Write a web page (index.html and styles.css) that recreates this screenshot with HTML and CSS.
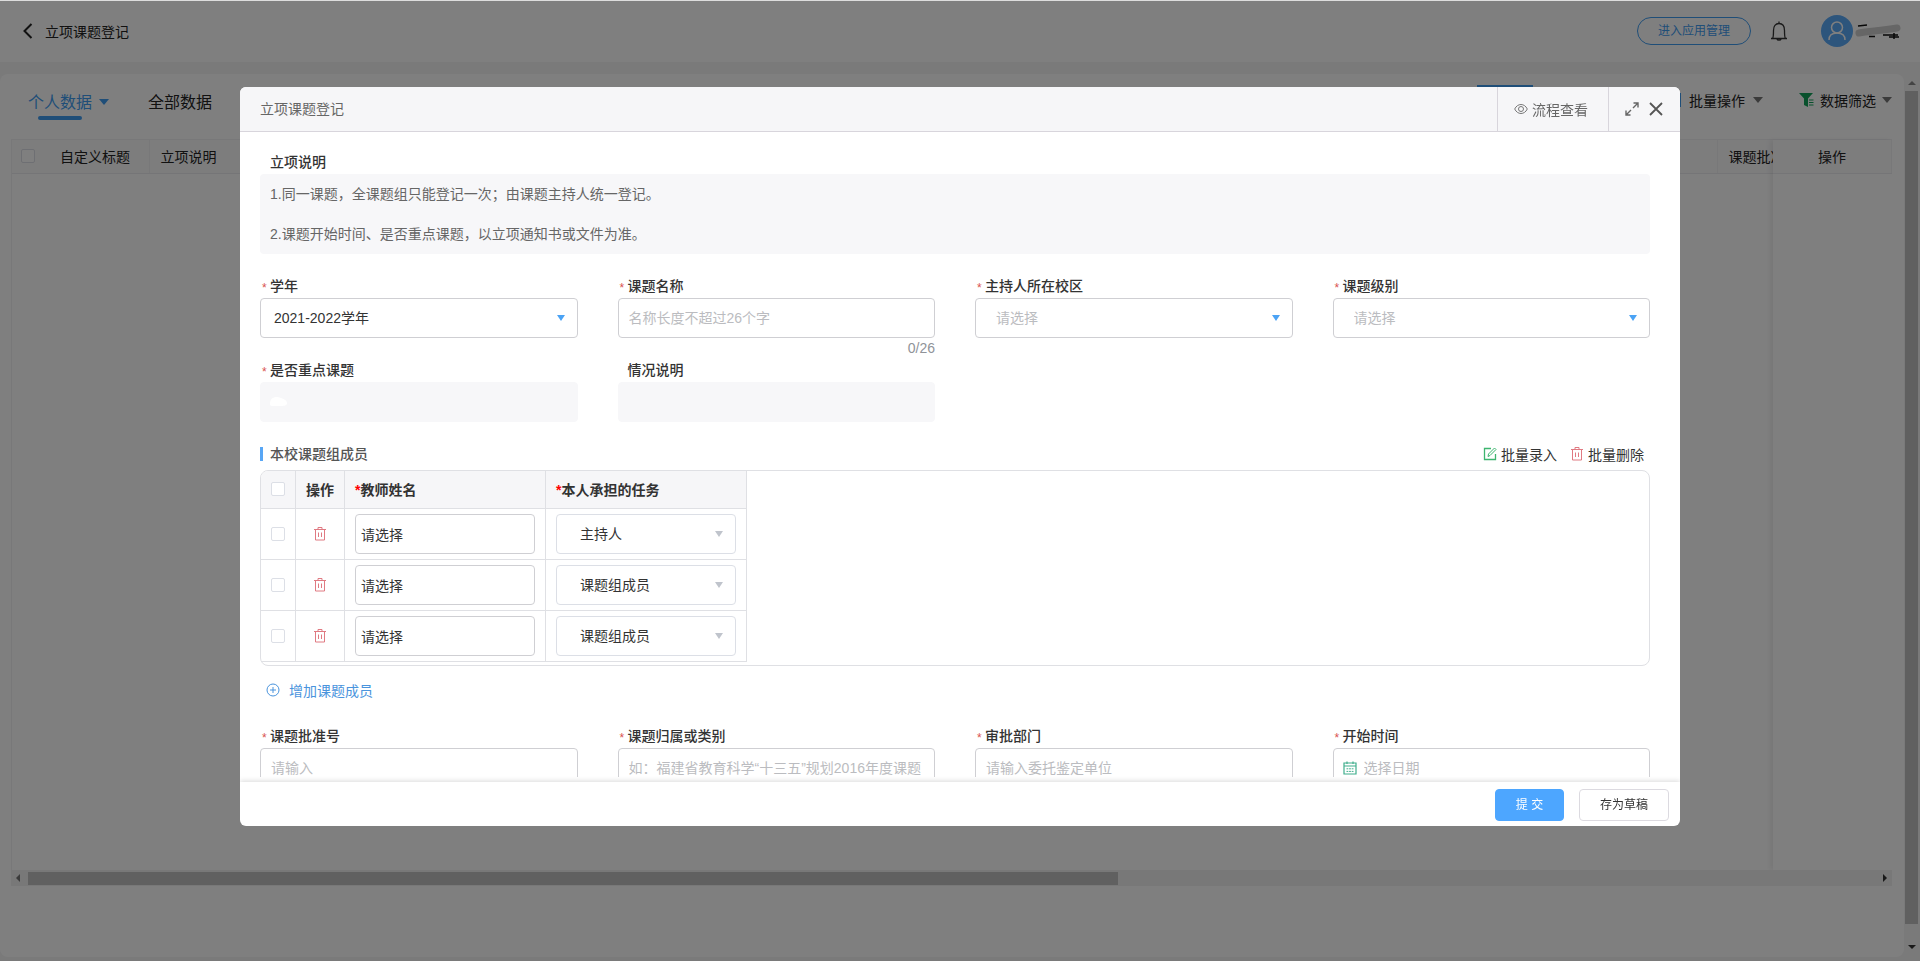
FILE: index.html
```html
<!DOCTYPE html>
<html lang="zh-CN">
<head>
    <meta charset="UTF-8">
    <meta name="viewport" content="width=device-width, initial-scale=1.0">
    <title>立项课题登记</title>
    <link rel="stylesheet" href="styles.css">
</head>
<body>
    <!-- shared icons -->
    <svg class="sprite" aria-hidden="true">
        <symbol id="icon-trash" viewBox="0 0 14 14">
            <path d="M1 2.500h12M5 2.500v-2h4v2M2.500 2.500v10.500h9V2.500M5.500 5.500v4.500M8.500 5.500v4.500" fill="none" stroke="currentColor"/>
        </symbol>
    </svg>

    <div class="page">
        <header class="topbar">
            <button type="button" class="icon-button" aria-label="返回">
                <svg width="12" height="16" viewBox="0 0 12 16"><path d="M10.500 1L3.500 8l7 7" fill="none" stroke="#222" stroke-width="2"/></svg>
            </button>
            <span class="topbar-title">立项课题登记</span>
            <button type="button" class="manage-button">进入应用管理</button>
            <button type="button" class="icon-button bell" aria-label="消息">
                <svg width="18" height="22" viewBox="0 0 18 22"><path d="M1 18.500h16M2.500 18.500c1-1 1-3 1-8 0-4 2-7 5.500-7s5.500 3 5.500 7c0 5 0 7 1 8M9 3.500V1.500M7 19c.3 1.500 3.700 1.500 4 0" fill="none" stroke="#333" stroke-width="1.300"/></svg>
            </button>
            <svg class="avatar" width="32" height="32" viewBox="0 0 32 32"><circle cx="16" cy="16" r="16" fill="#5aaaf8"/><g fill="none" stroke="#fff" stroke-width="1.500"><circle cx="16" cy="12.500" r="5.500"/><path d="M8 25c0-4.500 3-7 8-7s8 2.500 8 7"/></g></svg>
            <svg class="user-name" width="46" height="16" viewBox="0 0 46 16"><path d="M3 3l9-1M14 13.500h6M28 12h15M34 14h10M39 10v6" stroke="#111" stroke-width="1.500"/><path d="M4 10c10-2 20-2 38-5" stroke="#ccc" stroke-width="7" stroke-linecap="round" fill="none"/></svg>
        </header>

        <main class="panel">
            <div class="toolbar">
                <button type="button" class="tab active">个人数据</button>
                <span class="caret tab-caret"></span>
                <button type="button" class="tab">全部数据</button>
                <div class="toolbar-right">
                    <button type="button" class="add-button">新增</button>
                    <button type="button" class="tool batch">
                        <svg width="14" height="14" viewBox="0 0 14 14"><path d="M1 1h12v12H1z" fill="none" stroke="#3f9cf0" stroke-width="2"/></svg>
                        批量操作 <span class="caret"></span>
                    </button>
                    <button type="button" class="tool">
                        <svg width="15" height="14" viewBox="0 0 15 14"><path d="M0 0h14L9 5.500V14L5 12V5.500z" fill="#12a35a"/><path d="M10 7h4.500M10 9.500h4.500M10 12h4.500" stroke="#12a35a"/></svg>
                        数据筛选 <span class="caret"></span>
                    </button>
                </div>
            </div>
            <div class="grid">
                <div class="grid-main">
                    <table>
                        <thead>
                            <tr>
                                <th class="col-check"><input type="checkbox" aria-label="全选"></th>
                                <th class="col-title">自定义标题</th>
                                <th>立项说明</th>
                                <th class="col-number">课题批准号</th>
                            </tr>
                        </thead>
                    </table>
                </div>
                <div class="grid-fixed">
                    <table>
                        <thead>
                            <tr><th>操作</th></tr>
                        </thead>
                    </table>
                </div>
            </div>
            <div class="scroll-x">
                <span class="arrow-left"></span>
                <div class="scroll-x-rail"><div class="scroll-x-thumb"></div></div>
                <span class="arrow-right"></span>
            </div>
        </main>
        <div class="scroll-y">
            <span class="arrow-up"></span>
            <div class="scroll-y-thumb"></div>
            <span class="arrow-down"></span>
        </div>
    </div>

    <div class="overlay">
        <form class="modal">
            <div class="modal-header">
                <span class="modal-title">立项课题登记</span>
                <button type="button" class="flow-button">
                    <svg width="14" height="12" viewBox="0 0 14 12"><path d="M.7 6C3.500 0 10.500 0 13.300 6 10.500 12 3.500 12 .7 6z" fill="none" stroke="#777"/><circle cx="7" cy="6" r="2.500" fill="none" stroke="#777"/></svg>
                    流程查看
                </button>
                <div class="window-buttons">
                    <button type="button" class="icon-button" aria-label="全屏">
                        <svg width="14" height="14" viewBox="0 0 14 14"><path d="M8.500 1H13v4.500M13 1L8 6M5.500 13H1V8.500M1 13l5-5" fill="none" stroke="#666" stroke-width="1.400"/></svg>
                    </button>
                    <button type="button" class="icon-button" aria-label="关闭">
                        <svg width="14" height="14" viewBox="0 0 14 14"><path d="M1 1l12 12M13 1L1 13" stroke="#555" stroke-width="1.800"/></svg>
                    </button>
                </div>
            </div>

            <div class="modal-body">
                <div class="field-label">立项说明</div>
                <div class="notes">
                    <p>1.同一课题，全课题组只能登记一次；由课题主持人统一登记。</p>
                    <p>2.课题开始时间、是否重点课题，以立项通知书或文件为准。</p>
                </div>

                <div class="form-grid">
                    <div class="field">
                        <label class="field-label required" for="year">学年</label>
                        <div class="select-box">
                            <select id="year" class="control filled"><option>2021-2022学年</option></select>
                            <span class="caret"></span>
                        </div>
                    </div>
                    <div class="field">
                        <label class="field-label required" for="topicName">课题名称</label>
                        <input type="text" id="topicName" class="control" maxlength="26" placeholder="名称长度不超过26个字">
                        <div class="counter">0/26</div>
                    </div>
                    <div class="field">
                        <label class="field-label required" for="campus">主持人所在校区</label>
                        <div class="select-box">
                            <select id="campus" class="control"><option>请选择</option></select>
                            <span class="caret"></span>
                        </div>
                    </div>
                    <div class="field">
                        <label class="field-label required" for="level">课题级别</label>
                        <div class="select-box">
                            <select id="level" class="control"><option>请选择</option></select>
                            <span class="caret"></span>
                        </div>
                    </div>
                    <div class="field">
                        <label class="field-label required" for="keyTopic">是否重点课题</label>
                        <div class="select-box">
                            <input type="text" id="keyTopic" class="control" disabled>
                            <svg class="smudge" width="18" height="10" viewBox="0 0 18 10"><path d="M0 7C0 0 6-1 11 1c4 1 6 3 6 5 0 3-4 3-7 3H4C1 9 0 9 0 7z" fill="#fff"/></svg>
                        </div>
                    </div>
                    <div class="field">
                        <label class="field-label" for="remark">情况说明</label>
                        <input type="text" id="remark" class="control" disabled>
                    </div>
                </div>

                <div class="section-header">
                    <h3>本校课题组成员</h3>
                    <button type="button" class="batch-link">
                        <svg width="14" height="14" viewBox="0 0 14 14"><path d="M8 1.500H1.500v11h11V7" fill="none" stroke="#3db56f" stroke-width="1.300"/><path d="M5 9.500l.5-2.500 6-6 1.500 1.500-6 6z" fill="none" stroke="#3db56f"/></svg>
                        批量录入
                    </button>
                    <button type="button" class="batch-link">
                        <svg class="trash" width="14" height="14"><use href="#icon-trash"/></svg>
                        批量删除
                    </button>
                </div>
                <div class="members">
                    <table>
                        <thead>
                            <tr>
                                <th class="member-check"><input type="checkbox" aria-label="全选成员"></th>
                                <th class="member-action">操作</th>
                                <th class="member-field"><span class="star">*</span>教师姓名</th>
                                <th class="member-field"><span class="star">*</span>本人承担的任务</th>
                            </tr>
                        </thead>
                        <tbody>
                            <tr>
                                <td><input type="checkbox" aria-label="选择第1行"></td>
                                <td><button type="button" class="icon-button trash" aria-label="删除"><svg width="14" height="14"><use href="#icon-trash"/></svg></button></td>
                                <td><input type="text" class="control teacher" value="请选择" aria-label="教师姓名"></td>
                                <td><div class="select-box"><select class="control task" aria-label="本人承担的任务"><option>主持人</option></select><span class="caret"></span></div></td>
                            </tr>
                            <tr>
                                <td><input type="checkbox" aria-label="选择第2行"></td>
                                <td><button type="button" class="icon-button trash" aria-label="删除"><svg width="14" height="14"><use href="#icon-trash"/></svg></button></td>
                                <td><input type="text" class="control teacher" value="请选择" aria-label="教师姓名"></td>
                                <td><div class="select-box"><select class="control task" aria-label="本人承担的任务"><option>课题组成员</option></select><span class="caret"></span></div></td>
                            </tr>
                            <tr>
                                <td><input type="checkbox" aria-label="选择第3行"></td>
                                <td><button type="button" class="icon-button trash" aria-label="删除"><svg width="14" height="14"><use href="#icon-trash"/></svg></button></td>
                                <td><input type="text" class="control teacher" value="请选择" aria-label="教师姓名"></td>
                                <td><div class="select-box"><select class="control task" aria-label="本人承担的任务"><option>课题组成员</option></select><span class="caret"></span></div></td>
                            </tr>
                        </tbody>
                    </table>
                </div>
                <button type="button" class="add-member">
                    <svg width="14" height="14" viewBox="0 0 14 14"><circle cx="7" cy="7" r="6" fill="none" stroke="#4a94dd"/><path d="M4 7h6M7 4v6" stroke="#4a94dd"/></svg>
                    增加课题成员
                </button>

                <div class="form-grid">
                    <div class="field">
                        <label class="field-label required" for="approvalNo">课题批准号</label>
                        <input type="text" id="approvalNo" class="control" placeholder="请输入">
                    </div>
                    <div class="field">
                        <label class="field-label required" for="category">课题归属或类别</label>
                        <input type="text" id="category" class="control" placeholder="如：福建省教育科学“十三五”规划2016年度课题">
                    </div>
                    <div class="field">
                        <label class="field-label required" for="department">审批部门</label>
                        <input type="text" id="department" class="control" placeholder="请输入委托鉴定单位">
                    </div>
                    <div class="field">
                        <label class="field-label required" for="startDate">开始时间</label>
                        <div class="select-box">
                            <input type="text" id="startDate" class="control date" placeholder="选择日期">
                            <svg class="calendar" width="14" height="14" viewBox="0 0 14 14"><path d="M1 2h12v11H1zM1 5h12M4 .5v2.500M10 .5v2.500" fill="none" stroke="#3fae8c" stroke-width="1.200"/><path d="M3.500 7.800h7M3.500 10.400h7" stroke="#3fae8c" stroke-dasharray="1.800 .8"/></svg>
                        </div>
                    </div>
                </div>
            </div>

            <div class="modal-footer">
                <button type="submit" class="submit-button">提 交</button>
                <button type="button" class="draft-button">存为草稿</button>
            </div>
        </form>
    </div>
</body>
</html>
```
FILE: styles.css
```css
* {
    box-sizing: border-box;
}
body {
    margin: 0;
    font-family: "Liberation Sans", "Noto Sans CJK SC", sans-serif;
    font-size: 14px;
    color: #333;
    background-color: #f4f4f5;
}
button, input, select {
    font-family: inherit;
    font-size: 14px;
    color: inherit;
}
button {
    padding: 0;
    border: none;
    background: none;
    cursor: pointer;
    white-space: nowrap;
}
svg {
    display: block;
    flex: none;
}
table {
    border-collapse: collapse;
    table-layout: fixed;
}
.sprite {
    position: absolute;
    width: 0;
    height: 0;
}
.icon-button {
    display: flex;
    align-items: center;
    justify-content: center;
}
.caret {
    flex: none;
    width: 0;
    height: 0;
    border: 5px solid transparent;
    border-top: 6px solid currentColor;
    border-bottom: none;
}
input[type="checkbox"] {
    appearance: none;
    display: block;
    width: 14px;
    height: 14px;
    margin: 0 auto;
    border: 1px solid #dcdfe6;
    border-radius: 2px;
    background-color: #fff;
}

/* page behind the dialog */
.page {
    display: grid;
    grid-template-columns: 1fr 16px;
    grid-template-rows: 62px 1fr;
    row-gap: 12px;
    height: 100vh;
    padding-bottom: 4px;
}
.topbar {
    grid-column: 1 / 3;
    display: flex;
    align-items: center;
    padding: 0 19px 2px 21px;
    border-top: 1px solid #ddd;
    background-color: #fff;
}
.topbar-title {
    margin-left: 12px;
    margin-right: auto;
    color: #222;
}
.manage-button {
    width: 114px;
    height: 28px;
    padding-bottom: 2px;
    border: 1px solid #3f9cf0;
    border-radius: 14px;
    font-size: 12px;
    color: #3f9cf0;
}
.bell {
    margin: 0 33px 0 19px;
}
.user-name {
    margin-left: 2px;
}
.panel {
    display: flex;
    flex-direction: column;
    padding: 0 12px 71px 11px;
    border-radius: 8px;
    background-color: #fff;
    min-width: 0;
}
.toolbar {
    display: flex;
    align-items: flex-start;
    height: 65px;
    padding: 11px 0 0 17px;
}
.tab {
    height: 36px;
    padding-bottom: 4px;
    font-size: 16px;
    color: #222;
}
.tab.active {
    position: relative;
    color: #3f9cf0;
}
.tab.active::after {
    content: "";
    position: absolute;
    left: 10px;
    right: 10px;
    bottom: 1px;
    height: 4px;
    border-radius: 2px;
    background-color: #3f9cf0;
}
.tab-caret {
    margin: 14px 39px 0 7px;
    color: #3f9cf0;
}
.toolbar-right {
    display: flex;
    margin-left: auto;
}
.add-button {
    width: 56px;
    height: 32px;
    margin-right: 134px;
    background-color: #3f9cf0;
    color: #fff;
}
.tool {
    display: flex;
    align-items: center;
    gap: 6px;
    height: 30px;
    color: #222;
}
.tool .caret {
    color: #777;
}
.batch {
    gap: 8px;
    margin-right: 36px;
}
.grid {
    flex: 1;
    display: flex;
    border: 1px solid #f0f0f3;
    border-width: 1px 0 0 1px;
}
.grid-main {
    flex: 1;
    min-width: 0;
}
.grid-fixed {
    width: 119px;
    box-shadow: -3px 0 5px rgba(0, 0, 0, 0.07);
}
.grid table {
    width: 100%;
}
.grid th {
    height: 33px;
    padding: 0 11px;
    border-right: 1px solid #f0f0f3;
    border-bottom: 1px solid #ebebef;
    background-color: #fafafb;
    font-weight: normal;
    text-align: left;
    color: #222;
    overflow: hidden;
    white-space: nowrap;
}
.grid .col-check {
    width: 37px;
    padding: 0 6px 0 0;
    border-right: none;
}
.col-title {
    width: 100px;
}
.grid .col-number {
    width: 56px;
    padding-right: 0;
    border-right: none;
}
.grid-fixed th {
    text-align: center;
}
.scroll-x {
    display: flex;
    align-items: center;
    height: 16px;
    padding: 0 5px;
    background-color: #f1f1f1;
}
.scroll-x-rail {
    flex: 1;
    padding: 0 8px;
}
.scroll-x-thumb {
    width: 59%;
    height: 13px;
    background-color: #c1c1c1;
}
.arrow-left, .arrow-right {
    border: 4px solid transparent;
}
.arrow-left {
    border-left: none;
    border-right: 4px solid #777;
}
.arrow-right {
    border-right: none;
    border-left: 4px solid #333;
}
.scroll-y {
    display: flex;
    flex-direction: column;
    align-items: center;
    padding: 7px 2px 8px 1px;
}
.scroll-y-thumb {
    flex: 1;
    width: 13px;
    margin: 6px 0 21px;
    background-color: #c1c1c1;
}
.arrow-up, .arrow-down {
    border: 4px solid transparent;
}
.arrow-up {
    border-top: none;
    border-bottom: 4px solid #888;
}
.arrow-down {
    border-bottom: none;
    border-top: 4px solid #333;
}

/* dialog */
.overlay {
    position: fixed;
    inset: 1px 0 0;
    padding-top: 86px;
    background-color: rgba(0, 0, 0, 0.5);
}
.modal {
    display: flex;
    flex-direction: column;
    width: 75%;
    max-height: calc(100vh - 222px);
    margin: 0 auto;
    border-radius: 6px;
    background-color: #fff;
    overflow: hidden;
}
.modal-header {
    flex: none;
    display: flex;
    height: 45px;
    border-bottom: 1px solid #d8d5dc;
    background-color: #f6f6f8;
    color: #666;
}
.modal-title {
    flex: 1;
    padding-left: 20px;
    line-height: 44px;
}
.flow-button {
    display: flex;
    align-items: center;
    justify-content: center;
    gap: 4px;
    width: 112px;
    padding-right: 4px;
    border: 1px solid #d8d5dc;
    border-width: 0 1px;
}
.window-buttons {
    display: flex;
    gap: 10px;
    padding: 0 17px 0 16px;
}
.modal-body {
    padding: 18px 30px 0 20px;
    overflow: hidden;
}
.field-label {
    display: block;
    padding-left: 10px;
    line-height: 24px;
    font-weight: 500;
}
.required::before {
    content: "*";
    float: left;
    width: 8px;
    height: 24px;
    margin-left: -8px;
    line-height: 28px;
    font-size: 12px;
    font-weight: normal;
    color: #d9534f;
}
.notes {
    margin-bottom: 20px;
    padding-left: 10px;
    border-radius: 4px;
    background-color: #f7f7f9;
    line-height: 40px;
    color: #666;
}
.notes p {
    margin: 0;
}
.form-grid {
    display: grid;
    grid-template-columns: repeat(4, 1fr);
    column-gap: 40px;
}
.field {
    height: 84px;
}
.control {
    display: block;
    width: 100%;
    height: 40px;
    padding: 0 10px;
    border: 1px solid #cfcfd3;
    border-radius: 4px;
    background-color: #fff;
    outline: none;
}
.control::placeholder {
    color: #bbbcc0;
}
.control:disabled {
    border-color: #f7f7f9;
    background-color: #f7f7f9;
}
select.control {
    appearance: none;
    padding-left: 20px;
    color: #bbbcc0;
}
select.filled {
    padding-left: 13px;
    color: #333;
}
.select-box {
    position: relative;
}
.select-box .caret {
    position: absolute;
    right: 13px;
    top: 17px;
    border-left-width: 4px;
    border-right-width: 4px;
    color: #4ba3f5;
    pointer-events: none;
}
.smudge {
    position: absolute;
    left: 10px;
    top: 15px;
}
.calendar {
    position: absolute;
    left: 10px;
    top: 13px;
}
.control.date {
    padding-left: 30px;
}
.counter {
    line-height: 20px;
    text-align: right;
    color: #909399;
}
.section-header {
    display: flex;
    align-items: center;
    gap: 13px;
    height: 24px;
    margin-bottom: 4px;
    padding-right: 6px;
}
.section-header h3 {
    flex: 1;
    margin: 0;
    padding-left: 7px;
    border-left: 3px solid #58a6f5;
    font-size: 14px;
    line-height: 14px;
    font-weight: 500;
    color: #555;
}
.batch-link {
    display: flex;
    align-items: center;
    gap: 4px;
}
.trash {
    color: #e07a82;
}
.members {
    padding-bottom: 3px;
    border: 1px solid #dfe0e4;
    border-radius: 8px;
    overflow: hidden;
}
.members th, .members td {
    height: 51px;
    padding: 0 10px;
    border-right: 1px solid #dfe0e4;
    border-bottom: 1px solid #dfe0e4;
}
.members th {
    height: 37px;
    background-color: #f6f6f8;
    text-align: left;
    font-weight: 700;
}
.members .member-check {
    width: 34px;
}
.members .member-action {
    width: 49px;
    text-align: center;
}
.members .member-field {
    width: 201px;
}
.members td .icon-button {
    margin: 0 auto;
}
.star {
    color: #f00;
}
.control.teacher {
    padding: 0 5px;
}
select.control.task {
    padding-left: 23px;
    border-color: #dcdfe6;
    color: #333;
}
.members .caret {
    color: #c0c4cc;
}
.add-member {
    display: flex;
    align-items: center;
    gap: 9px;
    height: 24px;
    margin: 12px 0 22px 6px;
    color: #4a94dd;
}
.modal-footer {
    flex: none;
    display: flex;
    justify-content: flex-end;
    gap: 15px;
    height: 44px;
    margin-top: 5px;
    padding: 7px 11px 0;
    box-shadow: 0 -1px 5px rgba(0, 0, 0, 0.15);
}
.submit-button, .draft-button {
    width: 90px;
    height: 32px;
    padding-bottom: 3px;
    border: 1px solid #dcdae0;
    border-radius: 4px;
    font-size: 12px;
}
.submit-button {
    width: 69px;
    border-color: #4da6ff;
    background-color: #4da6ff;
    color: #fff;
}
```
